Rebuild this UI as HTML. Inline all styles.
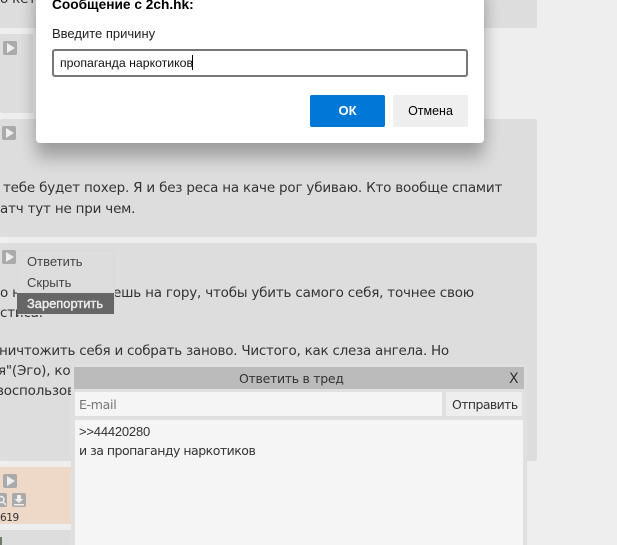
<!DOCTYPE html>
<html><head><meta charset="utf-8"><style>
html,body{margin:0;padding:0;width:617px;height:545px;overflow:hidden;background:#eee}
body{position:relative;font-family:"DejaVu Sans","Liberation Sans",sans-serif;color:#333}
div,span.a{position:absolute}
.t{white-space:nowrap;font-size:13.5px;line-height:20px;height:20px;letter-spacing:-.2px;color:#333}
.p{background:#ddd;border-radius:2px}
.ic{width:14px;height:14px;background:#aaa;border-radius:2px}
.ic svg{display:block}
.ui{font-family:"Liberation Sans",sans-serif;white-space:nowrap;color:#000}
</style></head><body>
<div class="p" style="left:0;top:-10px;width:537px;height:38px"></div>
<div class="t" style="left:0;top:-11px">о кет</div>
<div class="p" style="left:0;top:34px;width:33px;height:79px"></div>
<div class="ic" style="left:3px;top:41px"><svg width="14" height="14"><path d="M4 2L12 7L4 12Z" fill="#eee"/></svg></div>
<div class="p" style="left:0;top:119px;width:537px;height:118px"></div>
<div class="ic" style="left:2px;top:126px"><svg width="14" height="14"><path d="M4 2L12 7L4 12Z" fill="#eee"/></svg></div>
<div class="t" style="left:3px;top:178px">тебе будет похер. Я и без реса на каче рог убиваю. Кто вообще спамит</div>
<div class="t" style="left:0;top:199px">атч тут не при чем.</div>
<div class="p" style="left:0;top:243px;width:537px;height:218px"></div>
<div class="ic" style="left:2px;top:250px"><svg width="14" height="14"><path d="M4 2L12 7L4 12Z" fill="#eee"/></svg></div>
<div class="t" style="left:0;top:283px">о н</div>
<div class="t" style="left:113px;top:283px">ешь на гору, чтобы убить самого себя, точнее свою</div>
<div class="t" style="left:0;top:303px">стиса.</div>
<div class="t" style="left:-1px;top:341px;letter-spacing:-.25px">ничтожить себя и собрать заново. Чистого, как слеза ангела. Но</div>
<div class="t" style="left:-2px;top:361px">я"(Эго), кот</div>
<div class="t" style="left:-4px;top:381px">воспользов</div>
<div style="left:17px;top:250px;width:96px;height:64px;background:#ddd;border:1px solid #d9d9d9;border-bottom:0;border-radius:2px"></div>
<div class="ui" style="left:27px;top:254px;font-size:13px;line-height:16px;color:#444">Ответить</div>
<div class="ui" style="left:27px;top:275px;font-size:13px;line-height:16px;color:#444">Скрыть</div>
<div class="ui" style="left:17px;top:293px;width:97px;height:21px;background:#666;color:#eee;font-size:12.9px;line-height:21px;text-indent:10px;-webkit-text-stroke:.4px #eee">Зарепортить</div>
<div style="left:0;top:467px;width:71px;height:57px;background:#eed9c8"></div>
<div class="ic" style="left:3px;top:474px"><svg width="14" height="14"><path d="M4 2L12 7L4 12Z" fill="#eee"/></svg></div>
<div class="ic" style="left:-7px;top:493px"><svg width="14" height="14"><circle cx="8" cy="6.5" r="3" fill="none" stroke="#eee" stroke-width="1.5"/><path d="M10 9L13 12" stroke="#eee" stroke-width="1.5"/></svg></div>
<div class="ic" style="left:12px;top:493px"><svg width="14" height="14"><path d="M5 2H9V6H11.5L7 10L2.5 6H5Z M2 11H12V12.5H2Z" fill="#eee"/></svg></div>
<div class="t" style="left:0;top:509px;font-size:10.5px;line-height:18px;height:18px;letter-spacing:-.4px">619</div>
<div style="left:0;top:530px;width:71px;height:15px;background:#ddd"></div>
<div style="left:0;top:537px;width:2px;height:8px;background:#6d7b68"></div>

<div style="left:71px;top:364px;width:456px;height:181px;background:#e0e0e0"></div>
<div style="left:74px;top:367px;width:450px;height:22px;background:#bbb"></div>
<div class="t" style="left:239px;top:369px;font-size:12.5px;letter-spacing:-.3px">Ответить в тред</div>
<div class="t" style="left:509px;top:368px;line-height:22px;font-size:14px;letter-spacing:0">X</div>
<div style="left:75px;top:392px;width:367px;height:24px;background:#f5f5f5"></div>
<div class="t" style="left:79px;top:395px;color:#757575;font-size:12.5px;letter-spacing:-.3px">E-mail</div>
<div style="left:446px;top:392px;width:76px;height:24px;background:#eee"></div>
<div class="t" style="left:452px;top:395px;font-size:12.5px;letter-spacing:-.6px">Отправить</div>
<div style="left:75px;top:420px;width:448px;height:125px;background:#f5f5f5"></div>
<div class="t ui" style="left:79px;top:422px;font-size:13px;letter-spacing:-.2px;color:#333">&gt;&gt;44420280</div>
<div class="t" style="left:79px;top:441px;font-size:12.5px;letter-spacing:-.5px">и за пропаганду наркотиков</div>

<div style="left:36px;top:-20px;width:448px;height:163px;background:#fff;border-radius:4px;box-shadow:0 0 16px rgba(0,0,0,.12),0 16px 16px rgba(0,0,0,.24)"></div>
<div class="ui" style="left:52px;top:-3px;font-size:13.7px;line-height:16px;font-weight:bold">Сообщение с 2ch.hk:</div>
<div class="ui" style="left:52px;top:26px;font-size:13px;line-height:16px;color:#222">Введите причину</div>
<div style="left:52px;top:49px;width:412px;height:24px;border:2px solid #767676;border-radius:3px;background:#fff"></div>
<div class="ui" style="left:60px;top:55px;font-size:12.3px;line-height:16px;color:#111">пропаганда наркотиков</div>
<div style="left:192px;top:55px;width:1px;height:15px;background:#000"></div>
<div class="ui" style="left:310px;top:95px;width:75px;height:32px;background:#0078d7;border-radius:2px;color:#fff;font-weight:bold;font-size:13px;line-height:32px;text-align:center">ОК</div>
<div class="ui" style="left:393px;top:95px;width:75px;height:32px;background:#efefef;border-radius:2px;font-size:12.5px;line-height:32px;text-align:center">Отмена</div>
</body></html>
